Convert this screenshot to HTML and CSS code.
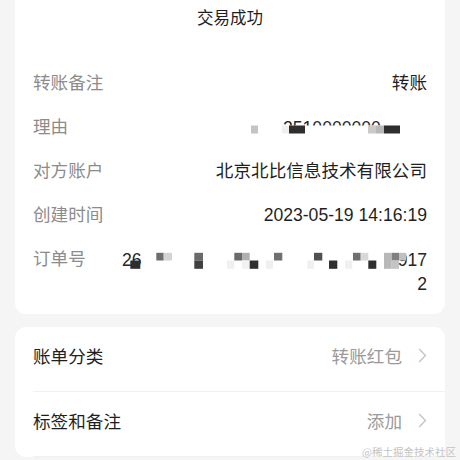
FILE: index.html
```html
<!DOCTYPE html>
<html lang="zh-CN">
<head>
<meta charset="utf-8">
<link rel="stylesheet" href="styles.css">
</head>
<body>
<div class="page">
  <section class="card detail">
    <h1 class="title">交易成功</h1>
    <div class="rows">
      <div class="row">
        <span class="label">转账备注</span>
        <span class="value">转账</span>
      </div>
      <div class="row">
        <span class="label">理由</span>
        <svg class="mosaic reason" width="152" height="25" viewBox="0 0 152 25">
          <defs><clipPath id="rc"><rect x="0" y="0" width="152" height="10.5"/></clipPath></defs>
          <text x="34" y="18.5" class="mtext" clip-path="url(#rc)">2510000000</text>
          <rect x="2" y="10.5" width="7" height="8" fill="#c4c4c4"/>
          <rect x="33" y="10.5" width="7" height="8" fill="#f0f0f0"/>
          <rect x="40" y="10.5" width="16" height="8" fill="#2e2e2e"/>
          <rect x="119" y="10.5" width="8" height="8" fill="#cacaca"/>
          <rect x="127" y="10.5" width="8" height="8" fill="#b8b8b8"/>
          <rect x="135" y="10.5" width="16" height="8" fill="#2e2e2e"/>
        </svg>
      </div>
      <div class="row">
        <span class="label">对方账户</span>
        <span class="value">北京北比信息技术有限公司</span>
      </div>
      <div class="row">
        <span class="label">创建时间</span>
        <span class="value">2023-05-19 14:16:19</span>
      </div>
      <div class="row order">
        <span class="label">订单号</span>
        <div class="order-value">
          <svg class="mosaic" width="305" height="25" viewBox="0 0 305 25">
            <text x="0" y="19" class="mtext">26</text>
            <text x="305" y="19" class="mtext" text-anchor="end">917</text>
            <rect x="8.3" y="13.5" width="10" height="8.3" fill="#2e2e2e"/>
            <rect x="34.3" y="5.8" width="7.4" height="7.7" fill="#6e6e6e"/>
            <rect x="41.7" y="5.8" width="8.3" height="7.7" fill="#d4d4d4"/>
            <rect x="72.3" y="5.8" width="8.7" height="7.7" fill="#6a6a6a"/>
            <rect x="72.3" y="13.5" width="8.7" height="8.3" fill="#404040"/>
            <rect x="105" y="13.5" width="7.3" height="8.3" fill="#f0f0f0"/>
            <rect x="112.3" y="5.8" width="7.7" height="7.7" fill="#6a6a6a"/>
            <rect x="120" y="5.8" width="7.7" height="7.7" fill="#b0b0b0"/>
            <rect x="120" y="13.5" width="7.7" height="8.3" fill="#f2f2f2"/>
            <rect x="127.7" y="13.5" width="8.6" height="8.3" fill="#303030"/>
            <rect x="144" y="13.5" width="7" height="8.3" fill="#f0f0f0"/>
            <rect x="152" y="5.8" width="8.3" height="7.7" fill="#707070"/>
            <rect x="185.3" y="13.5" width="6.7" height="8.3" fill="#f0f0f0"/>
            <rect x="192" y="5.8" width="8.3" height="7.7" fill="#505050"/>
            <rect x="207" y="13.5" width="8.3" height="8.3" fill="#303030"/>
            <rect x="223" y="13.5" width="7.3" height="8.3" fill="#f0f0f0"/>
            <rect x="231" y="5.8" width="7.7" height="7.7" fill="#707070"/>
            <rect x="238.7" y="5.8" width="7.6" height="7.7" fill="#d8d8d8"/>
            <rect x="246.3" y="13.5" width="8" height="8.3" fill="#303030"/>
            <rect x="262" y="5.8" width="7.7" height="16" fill="#b8b8b8"/>
            <rect x="269.7" y="5.8" width="7.3" height="7.7" fill="#808080"/>
            <rect x="269.7" y="13.5" width="7.3" height="8.3" fill="#c4c4c4"/>
            <rect x="277" y="5.8" width="7.3" height="7.7" fill="#c0c0c0"/>
          </svg>
          <span class="value">2</span>
        </div>
      </div>
    </div>
  </section>

  <section class="card menu">
    <div class="menu-row">
      <span class="menu-label">账单分类</span>
      <span class="menu-right">
        <span class="menu-value">转账红包</span>
        <svg class="chev" width="9" height="15" viewBox="0 0 9 15"><polyline points="1.2,1 7.4,7.5 1.2,14" fill="none" stroke="#c2c2c2" stroke-width="1.3"/></svg>
      </span>
    </div>
    <div class="menu-row">
      <span class="menu-label">标签和备注</span>
      <span class="menu-right">
        <span class="menu-value">添加</span>
        <svg class="chev" width="9" height="15" viewBox="0 0 9 15"><polyline points="1.2,1 7.4,7.5 1.2,14" fill="none" stroke="#c2c2c2" stroke-width="1.3"/></svg>
      </span>
    </div>
  </section>
</div>
<div class="watermark">@稀土掘金技术社区</div>
</body>
</html>
```

FILE: styles.css
```css
html, body {
  margin: 0;
  padding: 0;
  background: #f5f5f5;
  height: 460px;
  overflow: hidden;
}
body {
  font-family: "Liberation Sans", "Noto Sans CJK SC", sans-serif;
  color: #1f1f1f;
  position: relative;
}
.page {
  padding: 0 15px;
  display: flex;
  flex-direction: column;
  gap: 13px;
}
.card {
  background: #ffffff;
  border-radius: 11px;
}
.detail {
  border-top-left-radius: 0;
  border-top-right-radius: 0;
  padding: 5.5px 18px 17.5px;
}
.title {
  margin: 0;
  font-size: 16.5px;
  font-weight: 400;
  line-height: 25px;
  text-align: center;
  color: #1f1f1f;
}
.rows {
  margin-top: 40px;
  display: flex;
  flex-direction: column;
  gap: 19px;
}
.row {
  display: flex;
  justify-content: space-between;
  align-items: flex-start;
  font-size: 17.6px;
  line-height: 25px;
}
.label {
  color: #8c8c8c;
  white-space: nowrap;
}
.value {
  color: #1f1f1f;
  text-align: right;
}
.mosaic {
  display: block;
}
.reason {
  margin-right: 26px;
}
.mtext {
  font-family: "Liberation Sans", sans-serif;
  font-size: 17.6px;
  fill: #262626;
}
.order-value {
  display: flex;
  flex-direction: column;
  align-items: flex-end;
}
.menu {
  display: flex;
  flex-direction: column;
}
.menu-row {
  box-sizing: border-box;
  height: 65px;
  padding-bottom: 7px;
  margin-left: 18px;
  padding-right: 18px;
  border-bottom: 1px solid #f1f1f1;
  display: flex;
  align-items: center;
  justify-content: space-between;
  font-size: 17.6px;
}
.menu-label {
  color: #1f1f1f;
}
.menu-right {
  display: flex;
  align-items: center;
  gap: 16px;
}
.menu-value {
  color: #9a9a9a;
}
.chev {
  display: block;
}
.watermark {
  position: absolute;
  right: 4px;
  bottom: 1px;
  font-size: 10.5px;
  line-height: 14px;
  color: #c4c4c4;
  font-family: "Noto Sans CJK SC", sans-serif;
}
```
